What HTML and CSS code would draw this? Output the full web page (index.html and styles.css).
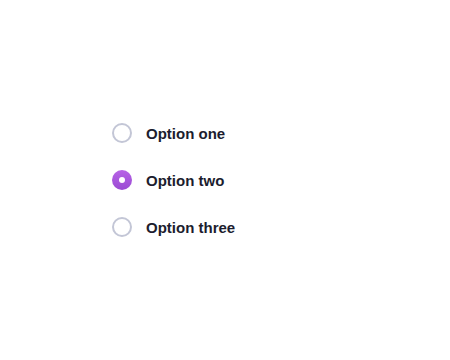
FILE: index.html
```html
<!DOCTYPE html>
<html>
<head>
<meta charset="utf-8">
<link rel="stylesheet" href="styles.css">
</head>
<body>
<div class="page">
  <div class="group">
    <label class="row"><span class="radio"></span><span class="label">Option one</span></label>
    <label class="row"><span class="radio checked"></span><span class="label">Option two</span></label>
    <label class="row"><span class="radio"></span><span class="label">Option three</span></label>
  </div>
</div>
</body>
</html>
```
FILE: styles.css
```css
html, body { margin: 0; padding: 0; background: #fff; }
.page {
  width: 450px;
  height: 360px;
  display: flex;
  align-items: center;
  padding-left: 112px;
  box-sizing: border-box;
}
.group {
  display: flex;
  flex-direction: column;
  gap: 27px;
  margin-top: 0;
}
.row {
  display: flex;
  align-items: center;
  gap: 14px;
  height: 20px;
}
.radio {
  width: 20px;
  height: 20px;
  box-sizing: border-box;
  border: 2px solid #c3c6d6;
  border-radius: 50%;
  background: #fff;
  display: flex;
  align-items: center;
  justify-content: center;
}
.radio.checked {
  border: none;
  background: linear-gradient(180deg, #b763e6 0%, #9a4bd3 100%);
}
.radio.checked::after {
  content: "";
  width: 6px;
  height: 6px;
  border-radius: 50%;
  background: #fff;
}
.label {
  font-family: "Liberation Sans", Arial, sans-serif;
  font-weight: bold;
  font-size: 15px;
  color: #1c1d2e;
}
```
